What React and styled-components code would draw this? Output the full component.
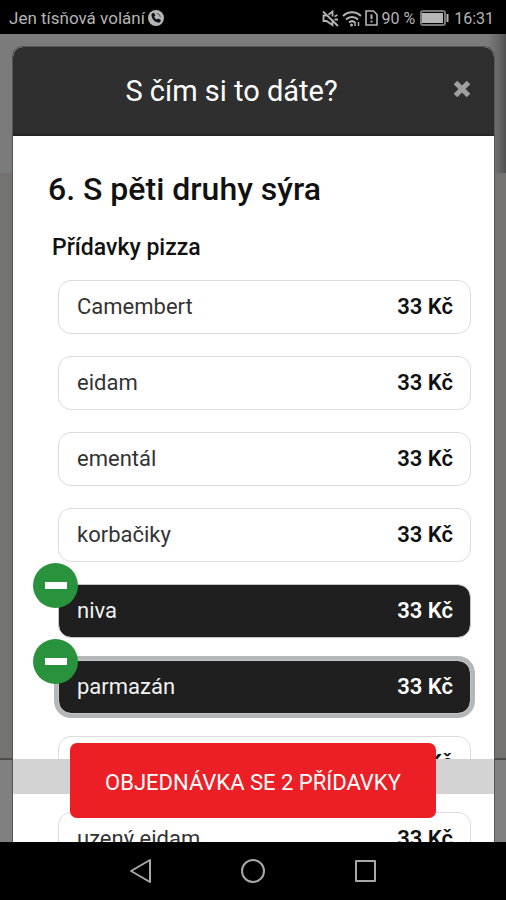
import { useState } from "react";
import styled, { createGlobalStyle, ThemeProvider } from "styled-components";

const theme = {
  colors: {
    header: "#2f2f2f",
    selected: "#1f1f1f",
    line: "#dcdcdc",
    ring: "#b4b7b9",
    green: "#28923c",
    red: "#ed1f26",
    status: "#b5b5b5",
    nav: "#a8a8a8",
    text: "#111111",
    textLight: "#333333",
  },
};

const GlobalStyle = createGlobalStyle`
  * {
    box-sizing: border-box;
    margin: 0;
    padding: 0;
  }

  body {
    background-color: #000;
    font-family: Roboto, "Liberation Sans", sans-serif;
  }

  button {
    border: none;
    background: none;
    font-family: inherit;
    cursor: pointer;
  }
`;

// Phone
const Screen = styled.div`
  height: 100vh;

  display: flex;
  flex-direction: column;

  background-color: #000;
`;

const StatusBar = styled.header`
  height: 34px;
  flex-shrink: 0;

  display: flex;
  align-items: center;
  justify-content: space-between;

  padding: 2px 12px 0 9px;

  font-size: 17px;
  color: ${({ theme }) => theme.colors.status};
`;

const StatusGroup = styled.div`
  display: flex;
  align-items: center;
  gap: ${({ $gap }) => $gap}px;
`;

const StatusValue = styled.span`
  font-size: 16px;
`;

const Stage = styled.main`
  position: relative;
  flex: 1;
  min-height: 0;
  overflow: hidden;

  padding: 13px 12px 0 13px;
`;

const NavBar = styled.nav`
  height: 58px;
  flex-shrink: 0;

  display: flex;
  align-items: center;
  justify-content: center;
  gap: 84px;
`;

const NavButton = styled.button`
  width: 28px;
  height: 28px;

  color: ${({ theme }) => theme.colors.nav};
`;

// Dimmed page under the dialog
const Backdrop = styled.div`
  position: absolute;
  inset: 0;

  display: flex;
  flex-direction: column;
`;

const BackdropTop = styled.div`
  height: 139px;

  background: linear-gradient(to left, #515151, #686868 8px, #7b7b7b 18px);
`;

const BackdropMiddle = styled.div`
  flex: 1;

  border-bottom: 2px solid #4c4c4c;

  background-color: #757370;
`;

const BackdropBottom = styled.div`
  height: 82px;

  background-color: #808080;
`;

// Dialog
const Dialog = styled.section`
  position: relative;

  border-radius: 10px 10px 0 0;

  background-color: #fff;
  box-shadow: 0 0 0 1px #555;
`;

const DialogHeader = styled.div`
  height: 89px;

  display: flex;
  align-items: center;

  padding: 0 20px 0 0;

  border-bottom: 2px solid #252525;
  border-radius: 10px 10px 0 0;

  background-color: ${({ theme }) => theme.colors.header};
`;

const DialogTitle = styled.h1`
  flex: 1;

  font-size: 29px;
  font-weight: 400;
  text-align: center;
  color: #fff;
`;

const CloseButton = styled.button`
  width: 24px;
  height: 36px;

  color: #a0a0a0;

  svg {
    display: block;
    margin: 0 auto 4px;
  }
`;

const DialogBody = styled.div`
  padding: 34px 23px 0 35px;
`;

const ProductName = styled.h2`
  font-size: 32px;
  font-weight: 500;
  line-height: 38px;
  color: ${({ theme }) => theme.colors.text};
`;

const GroupName = styled.h3`
  margin: 25px 0 0 4px;

  font-size: 23px;
  font-weight: 500;
  line-height: 30px;
  color: ${({ theme }) => theme.colors.text};
`;

const List = styled.ul`
  display: flex;
  flex-direction: column;
  gap: 22px;

  margin: 17px 0 0 10px;

  list-style: none;
`;

const Item = styled.li`
  position: relative;
`;

const Option = styled.button`
  width: 100%;
  height: 54px;

  display: flex;
  align-items: center;
  justify-content: space-between;

  padding: 0 17px 2px 18px;

  border: 1px solid ${({ theme, $selected }) => ($selected ? "#c4c4c4" : theme.colors.line)};
  border-radius: 13px;
  outline: none;

  font-size: 22px;
  color: ${({ theme, $selected }) => ($selected ? "#f2f2f2" : theme.colors.textLight)};
  background-color: ${({ theme, $selected }) => ($selected ? theme.colors.selected : "#fff")};
  background-clip: padding-box;
  box-shadow: ${({ theme, $focused }) => ($focused ? `0 0 0 4px ${theme.colors.ring}` : "none")};
`;

const Price = styled.span`
  font-weight: 600;
  color: ${({ $selected }) => ($selected ? "#fff" : "#111")};
`;

const RemoveBadge = styled.span`
  position: absolute;
  top: -21px;
  left: -25px;

  width: 45px;
  height: 45px;

  display: flex;
  align-items: center;
  justify-content: center;

  border-radius: 50%;

  background-color: ${({ theme }) => theme.colors.green};
  pointer-events: none;

  &::after {
    content: "";
    width: 22px;
    height: 7px;

    background-color: #fff;
  }
`;

// Order button floating over the list
const OrderStrip = styled.div`
  position: absolute;
  right: 12px;
  bottom: 48px;
  left: 13px;

  height: 35px;

  background-color: #d3d3d3;
`;

const OrderBar = styled.div`
  position: absolute;
  right: 0;
  bottom: 24px;
  left: 0;

  padding: 0 70px;
`;

const OrderButton = styled.button`
  width: 100%;
  height: 75px;

  padding-top: 3px;

  border-radius: 7px;

  font-size: 22px;
  color: #fff;
  background-color: ${({ theme }) => theme.colors.red};
`;

const toppings = [
  { name: "Camembert", price: 33 },
  { name: "eidam", price: 33 },
  { name: "ementál", price: 33 },
  { name: "korbačiky", price: 33 },
  { name: "niva", price: 33 },
  { name: "parmazán", price: 33 },
  { name: "sýr", price: 33 },
  { name: "uzený eidam", price: 33 },
];

function PhoneIcon() {
  return (
    <svg width="16" height="16" viewBox="0 0 16 16" aria-hidden="true">
      <circle cx="8" cy="8" r="8" fill="currentColor" />
      <path
        d="M4.4 3.2 6 2.8l1.3 2.7-1.1 1.2c.6 1.3 1.5 2.2 2.8 2.9l1.3-1.1 2.6 1.4-.5 1.7c-.3.8-1.2 1.2-2.2 1C6.7 12 4 9.2 3.5 5.6c-.1-1 .2-2 .9-2.4z"
        fill="#111"
      />
      <path d="M8.7 3.5a4 4 0 0 1 3.7 3.7" fill="none" stroke="#555" />
    </svg>
  );
}

function MuteIcon() {
  return (
    <svg width="17" height="17" viewBox="0 0 17 17" fill="none" stroke="currentColor" strokeWidth="1.8" aria-hidden="true">
      <path d="M4.5 5.5H1.5v5.500h3l6 4V9.500M6.500 4.800l4-3.300v5" />
      <path d="M1 1.500l15 14.500M12.500 6.500l3-1.500M12.500 9.500h3.500" />
    </svg>
  );
}

function WifiIcon() {
  return (
    <svg width="20" height="17" viewBox="0 0 20 17" fill="none" stroke="currentColor" strokeWidth="2" aria-hidden="true">
      <path d="M1 6c5.200-5 12.800-5 18 0M4 9.500c3.500-3.400 8.500-3.400 12 0M7 12.500c1.800-1.700 4.200-1.700 6 0" />
      <circle cx="9.500" cy="15" r="1.500" fill="currentColor" stroke="none" />
      <path d="M13 12v4M16.500 16v-4" strokeWidth="1.500" />
    </svg>
  );
}

function SimIcon() {
  return (
    <svg width="13" height="16" viewBox="0 0 13 16" fill="none" stroke="currentColor" strokeWidth="1.600" aria-hidden="true">
      <path d="M1 1h7.500L12 4.500V15H1z" />
      <path d="M6.500 4.500v4.500M6.500 10.500v2" strokeWidth="2" />
    </svg>
  );
}

function BatteryIcon() {
  return (
    <svg width="29" height="16" viewBox="0 0 29 16" aria-hidden="true">
      <rect x="1" y="1" width="24" height="14" rx="2" fill="none" stroke="#777" strokeWidth="2" />
      <rect x="2" y="3" width="21" height="10" fill="currentColor" />
      <path d="M27.500 4v8" stroke="currentColor" strokeWidth="2" />
    </svg>
  );
}

// Function Main
export default function App() {
  const [selected, setSelected] = useState(["niva", "parmazán"]);
  const [focused, setFocused] = useState("parmazán");

  const toggle = (name) => {
    setFocused(name);
    setSelected((old) =>
      old.includes(name) ? old.filter((item) => item !== name) : [...old, name]
    );
  };

  return (
    <ThemeProvider theme={theme}>
      <GlobalStyle />
      <Screen>
        <StatusBar>
          <StatusGroup $gap={3}>
            <span>Jen tísňová volání</span>
            <PhoneIcon />
          </StatusGroup>
          <StatusGroup $gap={5}>
            <StatusGroup $gap={3}>
              <MuteIcon />
              <WifiIcon />
              <SimIcon />
              <StatusValue>90 %</StatusValue>
            </StatusGroup>
            <BatteryIcon />
            <StatusValue>16:31</StatusValue>
          </StatusGroup>
        </StatusBar>

        <Stage>
          <Backdrop>
            <BackdropTop />
            <BackdropMiddle />
            <BackdropBottom />
          </Backdrop>

          <Dialog role="dialog" aria-labelledby="dialog-title">
            <DialogHeader>
              <DialogTitle id="dialog-title">S čím si to dáte?</DialogTitle>
              <CloseButton type="button" aria-label="Zavřít">
                <svg width="18" height="18" viewBox="0 0 18 18" stroke="currentColor" strokeWidth="5">
                  <path d="M2.500 2.500l13 13M15.500 2.500l-13 13" />
                </svg>
              </CloseButton>
            </DialogHeader>

            <DialogBody>
              <ProductName>6. S pěti druhy sýra</ProductName>
              <GroupName>Přídavky pizza</GroupName>
              <List>
                {toppings.map(({ name, price }) => {
                  const active = selected.includes(name);

                  return (
                    <Item key={name}>
                      <Option
                        type="button"
                        aria-pressed={active}
                        $selected={active}
                        $focused={focused === name}
                        onClick={() => toggle(name)}
                      >
                        <span>{name}</span>
                        <Price $selected={active}>{price} Kč</Price>
                      </Option>
                      {active && <RemoveBadge />}
                    </Item>
                  );
                })}
              </List>
            </DialogBody>
          </Dialog>

          <OrderStrip />
          <OrderBar>
            <OrderButton type="button">
              OBJEDNÁVKA SE {selected.length} PŘÍDAVKY
            </OrderButton>
          </OrderBar>
        </Stage>

        <NavBar>
          <NavButton type="button" aria-label="Zpět">
            <svg width="28" height="28" viewBox="0 0 28 28" fill="none" stroke="currentColor" strokeWidth="2" strokeLinejoin="round">
              <path d="M23 3v22L4 14z" />
            </svg>
          </NavButton>
          <NavButton type="button" aria-label="Domů">
            <svg width="28" height="28" viewBox="0 0 28 28" fill="none" stroke="currentColor" strokeWidth="2">
              <circle cx="14" cy="14" r="11" />
            </svg>
          </NavButton>
          <NavButton type="button" aria-label="Přehled aplikací">
            <svg width="28" height="28" viewBox="0 0 28 28" fill="none" stroke="currentColor" strokeWidth="2" strokeLinejoin="round">
              <path d="M5 4h19v20H5z" />
            </svg>
          </NavButton>
        </NavBar>
      </Screen>
    </ThemeProvider>
  );
}
